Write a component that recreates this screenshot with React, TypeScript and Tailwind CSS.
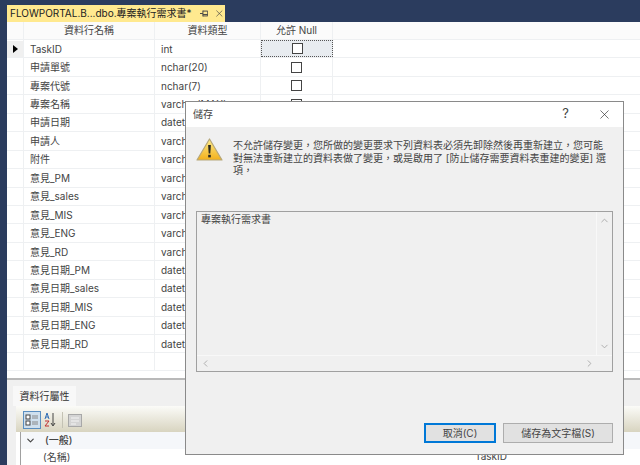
import { ChevronDown, ChevronLeft, ChevronRight, ChevronUp, X } from "lucide-react"

const font = "font-['Inter','Noto_Sans_CJK_TC',sans-serif]"

const rows = [
  ["TaskID", "int"],
  ["申請單號", "nchar(20)"],
  ["專案代號", "nchar(7)"],
  ["專案名稱", "varchar(MAX)"],
  ["申請日期", "datetime"],
  ["申請人", "varchar(50)"],
  ["附件", "varchar(MAX)"],
  ["意見_PM", "varchar(MAX)"],
  ["意見_sales", "varchar(MAX)"],
  ["意見_MIS", "varchar(MAX)"],
  ["意見_ENG", "varchar(MAX)"],
  ["意見_RD", "varchar(MAX)"],
  ["意見日期_PM", "datetime"],
  ["意見日期_sales", "datetime"],
  ["意見日期_MIS", "datetime"],
  ["意見日期_ENG", "datetime"],
  ["意見日期_RD", "datetime"],
]

// full-width comma, as the dialog text uses it
const comma = "\uFF0C"

function WarningIcon() {
  return (
    <svg width="27" height="24" viewBox="0 0 27 24" className="mt-[-1px] shrink-0">
      <defs>
        <linearGradient id="warn" x1="0" y1="0" x2="0" y2="1">
          <stop offset="0" stopColor="#fdeb8a" />
          <stop offset="1" stopColor="#f2b01c" />
        </linearGradient>
      </defs>
      <path d="M13.5 1 L26 22 H1 Z" fill="url(#warn)" stroke="#b5a77c" strokeWidth="1.2" strokeLinejoin="round" />
      <path d="M12.1 7 H14.9 L14.3 15.5 H12.7 Z" fill="#2a2a20" />
      <rect x="12.2" y="16.8" width="2.6" height="2.6" fill="#2a2a20" />
    </svg>
  )
}

function DesignerGrid() {
  return (
    <div className="h-[356px] shrink-0 bg-white text-[#444]">
      <div className="flex h-[18px] border-b border-[#eef0f2] bg-[#fbfbfb]">
        <div className="w-[17px] border-r border-[#eef0f2]" />
        <div className="flex w-[131px] items-center justify-center border-r border-[#eef0f2]">資料行名稱</div>
        <div className="flex w-[106px] items-center justify-center border-r border-[#eef0f2]">資料類型</div>
        <div className="flex w-[72px] items-center justify-center border-r border-[#eef0f2]">允許 Null</div>
      </div>
      {rows.map(([name, type], i) => (
        <div key={name} className="flex h-[18.45px] border-b border-[#eef0f2]">
          <div className="flex w-[17px] items-center justify-center border-r border-[#eef0f2]">
            {i === 0 && (
              <div className="flex h-[16px] w-[16px] items-center justify-center bg-[#f0f0f0]">
                <div className="h-0 w-0 border-y-[4.5px] border-l-[5px] border-y-transparent border-l-black" />
              </div>
            )}
          </div>
          <div className="flex w-[131px] items-center border-r border-[#eef0f2] pl-[6px] pt-[1px]">{name}</div>
          <div className="flex w-[106px] items-center border-r border-[#eef0f2] pl-[6px] pt-[1px]">{type}</div>
          <div
            className={
              i === 0
                ? "flex w-[72px] items-center justify-center border border-dotted border-[#555] bg-[#e8ecf0]"
                : "flex w-[72px] items-center justify-center border-r border-[#eef0f2]"
            }
          >
            <div className="h-[11px] w-[11px] border border-[#444] bg-white" />
          </div>
        </div>
      ))}
      <div className="flex h-[18px] border-b border-[#eef0f2]">
        <div className="w-[17px] border-r border-[#eef0f2]" />
        <div className="w-[131px] border-r border-[#eef0f2]" />
        <div className="w-[106px] border-r border-[#eef0f2]" />
      </div>
    </div>
  )
}

function PropertiesPane() {
  return (
    <div className="flex-1 border-t-2 border-[#b9b9b9] bg-[#f0f0f0] pl-[6px] pt-[6px] text-[#444]">
      <div className="flex h-[20px] w-[63px] items-center justify-center bg-[#f8f8f8] text-[#333]">資料行屬性</div>
      <div className="ml-[3px] h-[60px] bg-white">
        <div className="flex h-[26px] items-center gap-[2px] bg-gradient-to-b from-[#fbfbf8] to-[#d8d4c0] pl-[7px] pt-[2px]">
          <div className="flex h-[18px] w-[18px] items-center justify-center border border-[#5a8ec0] bg-[#cfe0ee]">
            <svg width="14" height="14" viewBox="0 0 14 14">
              <rect x="1" y="2" width="4" height="4" fill="#fff" stroke="#444" />
              <rect x="1" y="8" width="4" height="4" fill="#fff" stroke="#444" />
              <path d="M7 3h6M7 5h6M7 9h6M7 11h6" stroke="#888" />
            </svg>
          </div>
          <svg width="14" height="16" viewBox="0 0 14 16">
            <path d="M2 7 4 1l2 6M3 5h2" fill="none" stroke="#2d6cb5" />
            <path d="M2 9h4l-4 5h4" fill="none" stroke="#c03030" />
            <path d="M10 1v12M8 11l2 3 2-3" fill="none" stroke="#444" />
          </svg>
          <div className="mx-[3px] h-[16px] w-px bg-[#c4c2b4]" />
          <svg width="14" height="13" viewBox="0 0 14 13">
            <rect x="0.5" y="0.5" width="13" height="12" fill="#d4d4d4" stroke="#a8a8a8" />
            <path d="M3 4h8M3 7h8M3 10h5" stroke="#f4f4f4" />
          </svg>
        </div>
        <div className="ml-[4px] border-l border-[#a0a0a0]">
          <div className="flex h-[17px] items-center gap-[9px] bg-[#f5f7fa] pl-[4px] font-medium">
            <ChevronDown size={11} strokeWidth={2.5} className="text-[#444]" />
            <span>(一般)</span>
          </div>
          <div className="relative flex h-[17px] items-center pl-[22px]">
            <span>(名稱)</span>
            <span className="absolute left-[454px] top-0">TaskID</span>
          </div>
        </div>
      </div>
    </div>
  )
}

function SaveDialog() {
  return (
    <div className="absolute left-[185px] top-[101px] flex h-[354px] w-[439px] flex-col border border-[#8a8a8a] bg-[#f0f0f0] text-[#444]">
      <div className="flex h-[25px] shrink-0 items-center bg-white pb-[1px] pl-[7px] pr-[11px]">
        <span>儲存</span>
        <span className="ml-auto text-[13px]">?</span>
        <X size={15} strokeWidth={1} className="ml-[28px] text-[#222]" />
      </div>
      <div className="flex h-[84px] shrink-0 items-start gap-[10px] pl-[10px] pt-[12px]">
        <WarningIcon />
        <p className="whitespace-nowrap leading-[12.5px]">
          {`不允許儲存變更${comma}您所做的變更要求下列資料表必須先卸除然後再重新建立${comma}您可能`}
          <br />
          {`對無法重新建立的資料表做了變更${comma}或是啟用了 [防止儲存需要資料表重建的變更] 選`}
          <br />
          {`項${comma}`}
        </p>
      </div>
      <div className="mx-[10px] flex h-[161px] shrink-0 flex-col border border-[#a0a0a0]">
        <div className="flex flex-1">
          <div className="flex-1 pl-[4px]">專案執行需求書</div>
          <div className="flex w-[16px] flex-col items-center justify-between border-l border-[#f8f8f8] py-[3px] text-[#a8a8a8]">
            <ChevronUp size={11} />
            <ChevronDown size={11} />
          </div>
        </div>
        <div className="flex h-[16px] items-center justify-between border-t border-[#f8f8f8] px-[3px] text-[#a8a8a8]">
          <ChevronLeft size={11} />
          <ChevronRight size={11} className="mr-[14px]" />
        </div>
      </div>
      <div className="mt-[51px] flex justify-end gap-[7px] pr-[10px]">
        <button className="h-[20px] w-[72px] border-2 border-[#0078d7] bg-[#e1e1e1]">取消(C)</button>
        <button className="h-[20px] w-[110px] border border-[#adadad] bg-[#e1e1e1]">儲存為文字檔(S)</button>
      </div>
    </div>
  )
}

export default function App() {
  return (
    <div className={`relative h-[465px] w-[640px] overflow-hidden bg-[#2b3c5e] text-[10px] ${font}`}>
      <div className="flex h-full flex-col pl-[7px] pt-[5px]">
        <div className="flex h-[17px] w-[218px] shrink-0 items-center bg-[#ffe98f] pl-[3px] text-[#222]">
          <span className="whitespace-nowrap">FLOWPORTAL.B...dbo.專案執行需求書*</span>
          <svg width="9" height="9" viewBox="0 0 9 9" className="ml-[8px]">
            <path d="M0 4.5h3M3 1.5v6M3 2h5v5H3M3 5.5h5" fill="none" stroke="#444" />
          </svg>
          <X size={11} strokeWidth={1.5} className="ml-[6px] text-[#444]" />
        </div>
        <DesignerGrid />
        <PropertiesPane />
      </div>
      <SaveDialog />
    </div>
  )
}
